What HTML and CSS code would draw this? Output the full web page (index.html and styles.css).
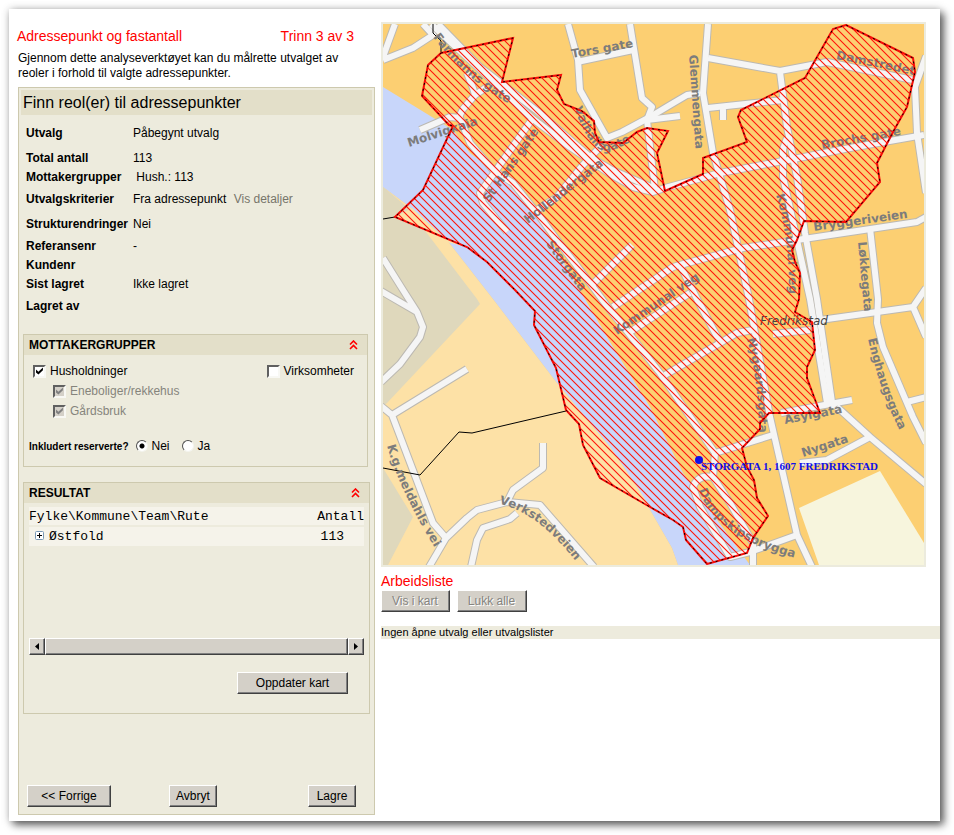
FILE: index.html
```html
<!DOCTYPE html>
<html lang="no">
<head>
<meta charset="utf-8">
<title>Adressepunkt og fastantall</title>
<link rel="stylesheet" href="styles.css">
</head>
<body>
<div class="window">
  <aside class="sidebar">
    <header class="step">
      <h1>Adressepunkt og fastantall</h1>
      <span>Trinn 3 av 3</span>
    </header>
    <p class="intro">Gjennom dette analyseverktøyet kan du målrette utvalget av reoler i forhold til valgte adressepunkter.</p>
    <form class="panel">
      <h2 class="panel-title">Finn reol(er) til adressepunkter</h2>
      <table class="details">
        <tr class="loose"><th scope="row">Utvalg</th><td>Påbegynt utvalg</td></tr>
        <tr><th scope="row">Total antall</th><td>113</td></tr>
        <tr class="medium"><th scope="row">Mottakergrupper</th><td>&nbsp;Hush.: 113</td></tr>
        <tr class="loose"><th scope="row">Utvalgskriterier</th><td>Fra adressepunkt <a href="#">Vis detaljer</a></td></tr>
        <tr class="medium"><th scope="row">Strukturendringer</th><td>Nei</td></tr>
        <tr><th scope="row">Referansenr</th><td>-</td></tr>
        <tr><th scope="row">Kundenr</th><td></td></tr>
        <tr class="medium"><th scope="row">Sist lagret</th><td>Ikke lagret</td></tr>
        <tr><th scope="row">Lagret av</th><td></td></tr>
      </table>

      <section class="group recipients">
        <div class="group-head">
          <h3>MOTTAKERGRUPPER</h3>
          <button type="button" class="collapse" aria-label="Skjul mottakergrupper"><svg width="9" height="10" viewBox="0 0 9 10"><path d="M1 4.5 4.5 1 8 4.5M1 9 4.5 5.500 8 9"/></svg></button>
        </div>
        <div class="choices">
          <div class="choice-row">
            <label><input type="checkbox" checked>Husholdninger</label>
            <label><input type="checkbox">Virksomheter</label>
          </div>
          <label class="sub"><input type="checkbox" checked disabled>Eneboliger/rekkehus</label>
          <label class="sub"><input type="checkbox" checked disabled>Gårdsbruk</label>
        </div>
        <div class="reserved" role="radiogroup" aria-labelledby="res">
          <strong id="res">Inkludert reserverte?</strong>
          <label><input type="radio" name="res" checked>Nei</label>
          <label><input type="radio" name="res">Ja</label>
        </div>
      </section>

      <section class="group result">
        <div class="group-head">
          <h3>RESULTAT</h3>
          <button type="button" class="collapse" aria-label="Skjul resultat"><svg width="9" height="10" viewBox="0 0 9 10"><path d="M1 4.5 4.5 1 8 4.5M1 9 4.5 5.500 8 9"/></svg></button>
        </div>
        <div class="tree">
          <table>
            <thead><tr><th>Fylke\Kommune\Team\Rute</th><th class="num">Antall</th></tr></thead>
            <tbody><tr><td><button type="button" class="expand" aria-label="Utvid"><svg width="9" height="9" viewBox="0 0 9 9"><rect x=".5" y=".5" width="8" height="8" rx="1"/><path d="M2 4.500H7M4.500 2V7"/></svg></button>Østfold</td><td class="num count">113</td></tr></tbody>
          </table>
        </div>
        <div class="scrollbar">
          <button type="button" aria-label="Rull til venstre"><svg width="4" height="7" viewBox="0 0 4 7"><path d="M4 0V7L0 3.500Z"/></svg></button>
          <div class="thumb"></div>
          <button type="button" aria-label="Rull til høyre"><svg width="4" height="7" viewBox="0 0 4 7"><path d="M0 0V7L4 3.500Z"/></svg></button>
        </div>
        <div class="update"><button type="button" class="btn wide">Oppdater kart</button></div>
      </section>

      <footer class="actions">
        <button type="button" class="btn back">&lt;&lt; Forrige</button>
        <button type="button" class="btn">Avbryt</button>
        <button type="button" class="btn save">Lagre</button>
      </footer>
    </form>
  </aside>

  <main class="content">
    <div class="map">
      <svg viewBox="383 24 541 541" role="img" aria-label="Kart over Fredrikstad">
        <defs>
          <pattern id="hatch" width="8" height="8" patternUnits="userSpaceOnUse">
            <path d="M-1-1 9 9M7-1 9 1M-1 7 1 9" stroke="#ff1408" stroke-width="1.1"/>
          </pattern>
          <path id="area" d="M441 53 513 38 502 82 561 75 557 90 564 104 582 111 594 121 595 133 599 142 623 143 637 132 647 128 668 131 657 153 665 191 703 174 703 158 747 142 738 117 741 110 805 78 833 29 846 25 913 58 915 72 907 107 893 132 877 163 880 182 846 222 804 221 797 240 792 250 795 262 800 273 799 299 795 312 812 322 815 350 807 367 807 378 820 413 769 413 760 423 760 429 742 448 747 467 754 480 757 498 768 516 753 538 747 553 707 564 686 540 683 527 673 520 650 507 600 478 583 445 579 424 566 410 556 368 534 325 535 311 515 290 487 262 467 247 395 217 423 190 453 126 449 125 422 96 428 65Z"/>
          <g id="roads">
            <path d="M431 24 470 60 533 119 570 147 610 174 633 187 653 192 665 188 720 173 783 161 850 148 924 135"/>
            <path d="M438 24 480 67 537 111 590 157 612 170 653 188"/>
            <path d="M383 60 413 48 433 35 423 24M395 24 383 57"/>
            <path d="M420 130 450 117 460 118 470 143 493 170 513 183 537 213 557 240 593 287 610 310 627 331 660 373 715 453 713 477 730 503 753 543V565"/>
            <path d="M458 119 463 109 475 95 487 87M467 73 473 88 475 95"/>
            <path d="M533 118 480 193 483 203 507 232"/>
            <path d="M602 145 583 165 557 197 537 210"/>
            <path d="M632 245 592 285M568 24 578 60 580 90 607 138 622 132 650 117 670 105 687 95 700 93"/>
            <path d="M577 62 633 50M630 24 642 98 652 107 647 120 655 190M647 120 680 116"/>
            <path d="M708 24 703 93 713 153 730 210 749 299 758 350 770 417 797 535 812 567"/>
            <path d="M708 58 780 71 827 62 913 80M780 72 787 127 797 177 805 233 817 299 833 409"/>
            <path d="M708 108 783 100M723 108V120M787 138 783 149V177L797 240 810 299 827 403"/>
            <path d="M926 56 915 87 917 133 926 193"/>
            <path d="M613 307 673 267 680 265 743 248 797 240 917 222 926 217"/>
            <path d="M630 332 690 293M680 265 697 299 720 342M665 375 720 343 737 333 753 330M773 334 810 330"/>
            <path d="M870 228 878 299 877 323 883 347 913 417 926 443"/>
            <path d="M820 320 913 307 926 288M913 307 926 337M907 402 926 397"/>
            <path d="M781 413 852 400M837 407 870 437 926 484M800 463 827 460 870 437M715 453 773 435"/>
            <path d="M713 477Q698 474 693 487L700 507 730 557 750 552 797 535"/>
            <path d="M381 291 417 312 423 327 420 337 400 364 381 382M383 258 403 290 417 312"/>
            <path d="M467 369 392 415 381 406M392 415 433 523 446 538"/>
            <path d="M429 567 446 538 467 518 477 510 507 502 513 490 543 468V443M507 502 540 505 594 567"/>
            <path d="M517 513 510 519 483 528 477 540 471 567"/>
          </g>
          <path id="t1" d="M433 37Q465 80 513 106"/>
          <path id="t2" d="M574 108Q590 151 606 151 619 151 648 130"/>
          <path id="t3" d="M699 490Q716 540 804 560"/>
          <path id="t4" d="M499 504Q538 512 577 563"/>
          <path id="t5" d="M776 195Q790 240 789 300"/>
          <path id="t6" d="M868 339Q880 393 902 435"/>
          <path id="t7" d="M387 446Q400 492 438 553"/>
          <path id="t8" d="M747 339Q759 382 759 436"/>
          <path id="t9" d="M836 59Q873 66 922 77"/>
        </defs>
        <rect x="383" y="24" width="541" height="541" fill="#fccf72"/>
        <path d="M383 187 410 207 447 240 493 299 557 383 610 447 637 487 672 548 678 565H383Z" fill="#fde1a6"/>
        <path d="M383 187 407 207 477 299 480 304 387 403 383 406ZM383 468 413 517 388 565H383Z" fill="#dfd8bc"/>
        <path d="M383 87 432 117 453 130 470 153 503 178 537 217 585 299 610 342 650 407 670 447 683 473 750 565H678L672 548 637 487 610 447 557 383 493 299 447 240 410 207 383 187Z" fill="#c8d6fa"/>
        <path d="M395 217 412 208 447 242 467 247ZM566 410 579 416 610 447 637 487 650 507 600 478 583 445Z" fill="#fde1a6"/>
        <path d="M799 508 880 471 924 543V565H819Z" fill="#f7f5dd"/>
        <use href="#roads" class="road-edge"/>
        <use href="#roads" class="road"/>
        <path class="border" d="M383 219 395 217M433 24V33L441 41V53M566 411 472 433 459 432 420 475 383 468"/>
        <g class="street">
          <text><textPath href="#t1">Farmanns gate</textPath></text>
          <text><textPath href="#t2">Valhallsgate</textPath></text>
          <text><textPath href="#t3">Dampskipsbrygga</textPath></text>
          <text><textPath href="#t4">Verkstedveien</textPath></text>
          <text><textPath href="#t5">Kommunal veg</textPath></text>
          <text><textPath href="#t6">Enghaugsgata</textPath></text>
          <text><textPath href="#t7">K.g.meldahls vei</textPath></text>
          <text><textPath href="#t8">Nygaardsgata</textPath></text>
          <text><textPath href="#t9">Damstredet</textPath></text>
          <text transform="translate(409 147) rotate(-18)">Molvigkaia</text>
          <text transform="translate(489 203) rotate(-55)">St Hans gate</text>
          <text transform="translate(528 224) rotate(-38)">Hollendergata</text>
          <text transform="translate(546 244) rotate(54)">Storgata</text>
          <text transform="translate(572 58) rotate(-10)">Tors gate</text>
          <text transform="translate(689 55) rotate(86)">Glemmengata</text>
          <text transform="translate(822 149) rotate(-10)">Brochs gate</text>
          <text transform="translate(814 231) rotate(-8)">Bryggeriveien</text>
          <text transform="translate(858 242) rotate(85)">Løkkegata</text>
          <text transform="translate(785 424) rotate(-11)">Asylgata</text>
          <text transform="translate(803 457) rotate(-18)">Nygata</text>
          <text transform="translate(617 335) rotate(-34)">Kommunal veg</text>
        </g>
        <text class="town" x="760" y="325">Fredrikstad</text>
        <use href="#area" fill="url(#hatch)"/>
        <use href="#area" class="outline"/>
        <use href="#area" class="outline-dash"/>
        <circle cx="699" cy="460" r="4" fill="#1010e8"/>
        <text class="address" x="701" y="470">STORGATA 1, 1607 FREDRIKSTAD</text>
      </svg>
    </div>
    <section class="worklist">
      <h2>Arbeidsliste</h2>
      <div class="worklist-actions">
        <button type="button" class="btn" disabled>Vis i kart</button>
        <button type="button" class="btn" disabled>Lukk alle</button>
      </div>
      <p class="empty">Ingen åpne utvalg eller utvalgslister</p>
    </section>
  </main>
</div>
</body>
</html>
```
FILE: styles.css
```css
* { box-sizing: border-box; }
body {
  margin: 0;
  min-height: 100vh;
  display: flex;
  padding: 9px 14px 14px 9px;
  background: #fff;
  color: #000;
  font: 12px/15px "Liberation Sans", Arial, sans-serif;
}
h1, h2, h3, p { margin: 0; font-weight: normal; }
button, input { font: inherit; margin: 0; }

.window {
  flex: 1;
  display: grid;
  grid-template-columns: 366px 1fr;
  column-gap: 6px;
  background: #fff;
  box-shadow: 4px 4px 8px rgba(0, 0, 0, .6), 0 0 8px rgba(0, 0, 0, .2);
}

.sidebar { display: flex; flex-direction: column; padding: 18px 0 6px 9px; }
.step { display: flex; justify-content: space-between; padding-right: 21px; margin-left: -1px; color: #f00; font-size: 14px; line-height: 18px; }
.step h1 { font-size: 14px; }
.intro { padding: 6px 30px 6px 0; line-height: 15px; }

.panel {
  flex: 1;
  display: flex;
  flex-direction: column;
  background: #edebdd;
  border: 1px solid #cdc9ae;
  padding: 2px;
}
.panel-title { padding: 0 2px; background: #e3dfc9; font-size: 16px; line-height: 25px; }

.details { margin: 9px 0 0 5px; border-collapse: collapse; }
.details th, .details td { padding: 0; height: 19px; vertical-align: top; text-align: left; line-height: 19px; }
.details th { width: 107px; }
.details .medium > * { height: 22px; }
.details .loose > * { height: 25px; }
.details a { margin-left: 4px; color: #77756a; text-decoration: none; }

.group { border: 1px solid #cdc9ae; margin: 0 2px; }
.recipients { margin-top: 18px; margin-right: 4px; height: 133px; }
.result { margin-top: 15px; height: 232px; }
.group-head { display: flex; align-items: center; justify-content: space-between; height: 20px; padding: 0 9px 0 5px; background: #e3dfc9; }
.group-head h3 { font-size: 12px; font-weight: bold; }
.collapse, .expand { padding: 0; border: 0; background: none; display: inline-flex; }
.collapse svg { fill: none; stroke: #f00; stroke-width: 1.6; }
.expand { margin: 0 5px 0 6px; }
.expand rect { fill: #fff; stroke: #7898b5; }
.expand path { stroke: #000; }

.choices { padding: 6px 13px 0 9px; display: flex; flex-direction: column; }
.choice-row { display: flex; justify-content: space-between; }
label { display: inline-flex; align-items: center; height: 20px; gap: 4px; }
.sub { padding-left: 20px; color: #85847c; }
.reserved { display: flex; align-items: center; margin-top: 15px; padding-left: 5px; }
.reserved strong { font-size: 10px; margin-right: 7px; }
.reserved label { margin-right: 12px; }

input[type="checkbox"] {
  appearance: none;
  width: 13px;
  height: 13px;
  background: #fff;
  border: 2px solid;
  border-color: #606060 #f8f8f4 #f8f8f4 #606060;
}
input[type="checkbox"]:checked::before {
  content: "";
  display: block;
  width: 9px;
  height: 9px;
  background: #000;
  clip-path: polygon(11% 34%, 38% 58%, 88% 10%, 88% 42%, 38% 90%, 11% 66%);
}
input[type="checkbox"]:disabled { background: #d4d0c8; }
input[type="checkbox"]:disabled::before { background: #808080; }
input[type="radio"] {
  appearance: none;
  width: 12px;
  height: 12px;
  border: 1px solid;
  border-color: #505050 #f4f4ee #f4f4ee #505050;
  border-radius: 50%;
  background: #fff;
}
input[type="radio"]:checked { background: radial-gradient(circle, #000 2px, #fff 3px); }

.tree { height: 129px; margin: 4px 5px 0; }
.tree table { width: 100%; border-collapse: collapse; font: 13px/17px "Liberation Mono", "Courier New", monospace; }
.tree th, .tree td { padding: 0; background: #f5f3ea; text-align: left; font-weight: normal; }
.tree thead th { height: 19px; border-bottom: 2px solid #edebdd; }
.tree tbody td { height: 20px; }
.tree th.num, .tree td.num { text-align: right; }
.tree td.count { padding-right: 20px; }

.scrollbar { display: flex; height: 17px; margin: 2px 5px 0; background: #e9e7e0; }
.scrollbar button, .thumb { border: 1px solid; border-color: #fff #404040 #404040 #fff; background: #d4d0c8; box-shadow: inset -1px -1px #808080; }
.scrollbar button { width: 16px; padding: 0; display: flex; align-items: center; justify-content: center; }
.thumb { flex: 1; }

.btn {
  height: 22px;
  padding: 0 6px;
  border: 1px solid;
  border-color: #fff #404040 #404040 #fff;
  background: #d4d0c8;
  box-shadow: inset -1px -1px #808080;
  color: #000;
}
.btn:disabled { color: #85847f; text-shadow: 1px 1px #fff; }
.btn.wide { width: 111px; }
.btn.back { width: 84px; margin-right: 58px; }
.btn.save { width: 48px; margin-left: auto; }
.update { display: flex; justify-content: flex-end; padding: 17px 21px 0 0; }
.actions { display: flex; margin-top: auto; padding: 0 16px 5px 6px; }

.content { padding-top: 13px; min-width: 0; }
.map { margin-right: 14px; border: 2px solid #ecebdd; }
.map svg { display: block; width: 100%; height: auto; }
.road-edge, .road { fill: none; stroke-linejoin: round; }
.road-edge { stroke: #bcb9b2; stroke-width: 8px; }
.road { stroke: #f5f5f5; stroke-width: 6px; }
.border { fill: none; stroke: #000; }
.street { fill: #7c7c7c; font: bold 12px "DejaVu Sans", Verdana, sans-serif; }
.town { fill: #444; font: italic 12px "DejaVu Sans", Verdana, sans-serif; }
.address { fill: #1010e8; font: bold 11px "Liberation Serif", "Times New Roman", serif; }
.outline { fill: none; stroke: #f80c08; stroke-width: 2px; }
.outline-dash { fill: none; stroke: #000; stroke-dasharray: 2 4; }

.worklist h2 { margin-top: 5px; color: #f00; font-size: 14px; line-height: 18px; }
.worklist-actions { display: flex; gap: 7px; }
.worklist-actions .btn { padding: 0 11px 0 10px; }
.empty { margin-top: 14px; background: #edebdd; font-size: 11px; line-height: 13px; }
```
